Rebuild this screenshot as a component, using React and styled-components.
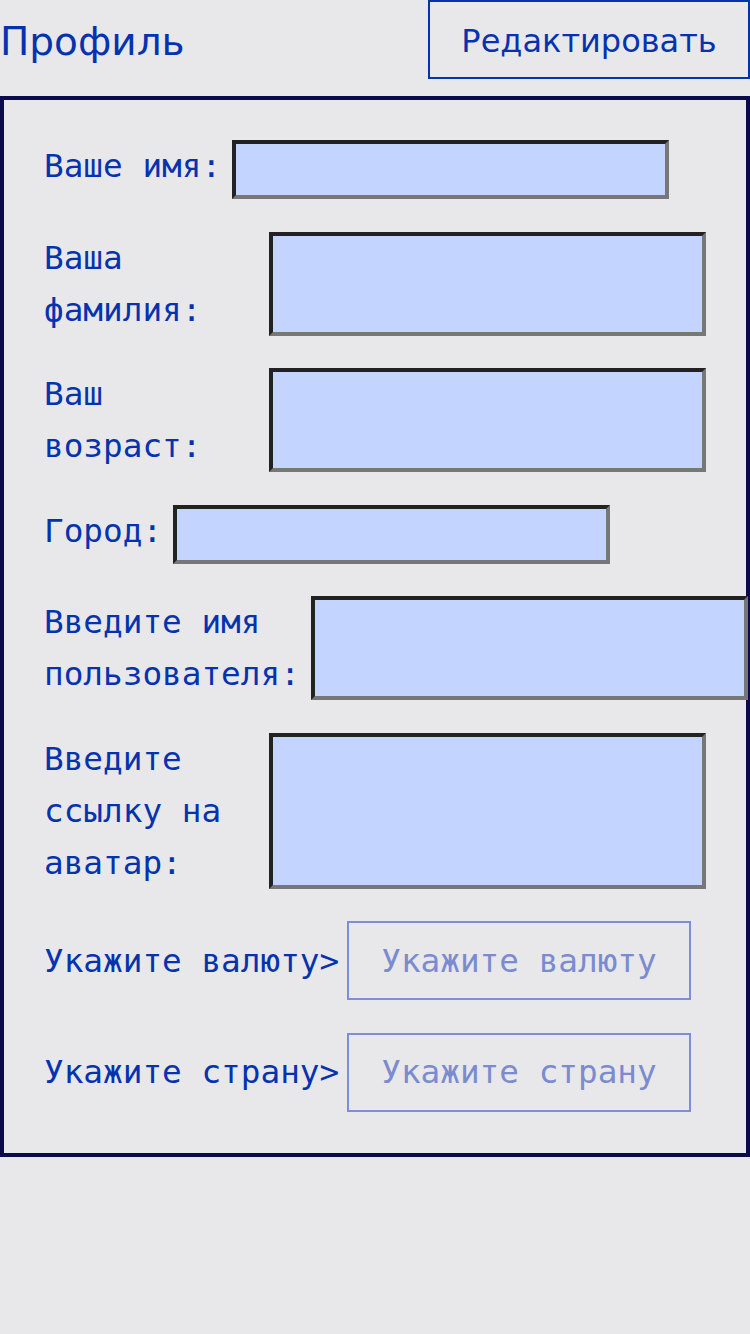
import React from 'react';
import styled, { createGlobalStyle } from 'styled-components';

const GlobalStyle = createGlobalStyle`
  html, body {
    margin: 0;
    padding: 0;
    background-color: #e8e8ea;
    min-height: 100%;
  }
  body {
    font-family: "DejaVu Sans", sans-serif;
  }
`;

const Page = styled.div`
  width: 750px;
  min-height: 1334px;
  background-color: #e8e8ea;
`;

const Header = styled.header`
  display: flex;
  align-items: center;
  justify-content: space-between;
  margin-bottom: 17px;
`;

const Title = styled.h1`
  margin: 0;
  padding-top: 4px;
  font-family: "DejaVu Sans", sans-serif;
  font-weight: normal;
  font-size: 39px;
  color: #0533b0;
`;

const EditButton = styled.button`
  box-sizing: border-box;
  width: 322px;
  height: 79px;
  padding: 2px 0 0;
  background: transparent;
  border: 2px solid #0533b0;
  font-family: "DejaVu Sans", sans-serif;
  font-size: 32px;
  color: #0533b0;
`;

const Form = styled.form`
  box-sizing: border-box;
  width: 750px;
  display: flex;
  flex-direction: column;
  gap: 32.5px;
  padding: 40px 40px 41px 40px;
  border: 4px solid #0b0a4b;
  font-family: "DejaVu Sans Mono", monospace;
  font-size: 32.7px;
  color: #0533b0;
`;

const Row = styled.div`
  display: flex;
  align-items: ${(p) => (p.$center ? 'center' : 'flex-start')};
`;

const Label = styled.label`
  flex: 0 1 auto;
  margin-right: ${(p) => (p.$gap ? p.$gap : 11)}px;
  line-height: 52px;
`;

const Field = styled.input`
  box-sizing: border-box;
  flex: 0 0 437px;
  width: 437px;
  min-height: 59px;
  align-self: stretch;
  margin: 0;
  padding: 0;
  background-color: #c3d5fe;
  border-style: solid;
  border-width: 4px;
  border-color: #222222 #777777 #777777 #222222;
  outline: none;
`;

const Picker = styled.button`
  box-sizing: border-box;
  height: 79px;
  padding: 0 32px;
  background: transparent;
  border: 2px solid #7a8fd4;
  font-family: "DejaVu Sans Mono", monospace;
  font-size: 32.7px;
  color: #7b8bd0;
`;

const fields = [
  'Ваше имя:',
  'Ваша фамилия:',
  'Ваш возраст:',
  'Город:',
  'Введите имя пользователя:',
  'Введите ссылку на аватар:',
];

const pickers = ['Укажите валюту', 'Укажите страну'];

export default function App() {
  return (
    <Page>
      <GlobalStyle />
      <Header>
        <Title>Профиль</Title>
        <EditButton type="button">Редактировать</EditButton>
      </Header>

      <Form onSubmit={(e) => e.preventDefault()}>
        {fields.map((text) => (
          <Row key={text}>
            <Label>{text}</Label>
            <Field type="text" />
          </Row>
        ))}

        {pickers.map((text) => (
          <Row key={text} $center>
            <Label $gap={8}>{text}&gt;</Label>
            <Picker type="button">{text}</Picker>
          </Row>
        ))}
      </Form>
    </Page>
  );
}
